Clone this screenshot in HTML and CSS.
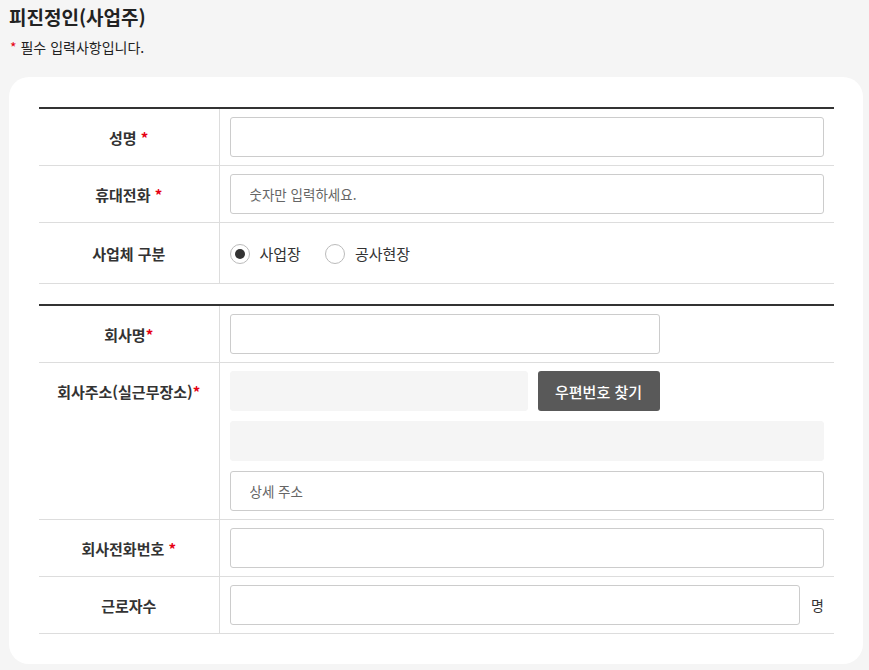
FILE: index.html
```html
<!DOCTYPE html>
<html lang="ko">
<head>
<meta charset="utf-8">
<link rel="stylesheet" href="styles.css">
</head>
<body>
<div class="page">
  <h2 class="title">피진정인(사업주)</h2>
  <p class="note"><span class="req">*</span> 필수 입력사항입니다.</p>
  <div class="card">
    <table class="form">
      <tr>
        <th>성명 <span class="req">*</span></th>
        <td><input class="inp full" type="text"></td>
      </tr>
      <tr>
        <th>휴대전화 <span class="req">*</span></th>
        <td><input class="inp full" type="text" placeholder="숫자만 입력하세요."></td>
      </tr>
      <tr class="radio-row">
        <th>사업체 구분</th>
        <td>
          <div class="radios">
            <label class="radio"><span class="dot on"></span>사업장</label>
            <label class="radio"><span class="dot"></span>공사현장</label>
          </div>
        </td>
      </tr>
    </table>
    <table class="form second">
      <tr>
        <th>회사명<span class="req">*</span></th>
        <td><input class="inp mid" type="text"></td>
      </tr>
      <tr>
        <th class="top">회사주소(실근무장소)<span class="req">*</span></th>
        <td>
          <div class="addr">
            <div class="addr-line">
              <div class="inp gray zip"></div>
              <button class="btn" type="button">우편번호 찾기</button>
            </div>
            <div class="inp gray full"></div>
            <input class="inp full" type="text" placeholder="상세 주소">
          </div>
        </td>
      </tr>
      <tr>
        <th>회사전화번호 <span class="req">*</span></th>
        <td><input class="inp full" type="text"></td>
      </tr>
      <tr>
        <th>근로자수</th>
        <td>
          <div class="count">
            <input class="inp grow" type="text">
            <span class="unit">명</span>
          </div>
        </td>
      </tr>
    </table>
  </div>
</div>
</body>
</html>
```

FILE: styles.css
```css
* { box-sizing: border-box; }
html, body {
  margin: 0;
  background: #f5f5f5;
}
body {
  font-family: "Noto Sans CJK KR", "Noto Sans", sans-serif;
  color: #222;
}
.page {
  padding: 0 6px 7px 9px;
}
.title {
  margin: 0;
  padding-left: 0;
  font-size: 19px;
  font-weight: 700;
  line-height: 34px;
  color: #222;
}
.note {
  margin: 3px 0 0;
  padding-left: 1px;
  font-size: 14px;
  line-height: 20px;
  color: #222;
}
.req { color: #e60012; }
.card {
  margin-top: 20px;
  background: #fff;
  border-radius: 20px;
  padding: 30px 29px 30px 30px;
}
.form {
  width: 100%;
  border-collapse: collapse;
  border-top: 2px solid #333;
}
.form.second { margin-top: 20px; }
.form th {
  width: 180px;
  border-bottom: 1px solid #ddd;
  border-right: 1px solid #ddd;
  font-size: 15px;
  font-weight: 700;
  color: #333;
  text-align: center;
  padding: 0;
}
.form th.top {
  vertical-align: top;
  padding-top: 18px;
}
.form td {
  border-bottom: 1px solid #ddd;
  padding: 8px 10px 8px 10px;
}
.inp {
  display: block;
  height: 40px;
  border: 1px solid #ccc;
  border-radius: 3px;
  padding: 0 19px;
  font-family: inherit;
  font-size: 14px;
  color: #333;
  background: #fff;
  outline: none;
}
.inp::placeholder { color: #666; font-size: 13.5px; }
.full { width: 100%; }
.mid { width: 430px; }
.gray {
  background: #f5f5f5;
  border-color: #f5f5f5;
}
.radio-row td { height: 61px; padding-top: 0; padding-bottom: 0; }
.radios {
  display: flex;
  align-items: center;
  gap: 24px;
  padding-top: 1px;
}
.radio {
  display: flex;
  align-items: center;
  gap: 10px;
  font-size: 15px;
  color: #333;
}
.dot {
  width: 20px;
  height: 20px;
  border-radius: 50%;
  border: 1px solid #bbb;
  background: #fff;
  position: relative;
}
.dot.on::after {
  content: "";
  position: absolute;
  left: 4px;
  top: 4px;
  width: 10px;
  height: 10px;
  border-radius: 50%;
  background: #333;
}
.addr {
  display: flex;
  flex-direction: column;
  gap: 10px;
}
.addr-line {
  display: flex;
  gap: 10px;
}
.zip { width: 298px; }
.btn {
  width: 122px;
  height: 40px;
  border: 0;
  border-radius: 3px;
  background: #595959;
  color: #fff;
  font-family: inherit;
  font-size: 15px;
  font-weight: 500;
}
.count {
  display: flex;
  align-items: center;
  gap: 11px;
}
.grow { flex: 1; }
.unit {
  font-size: 14px;
  color: #333;
}
```
